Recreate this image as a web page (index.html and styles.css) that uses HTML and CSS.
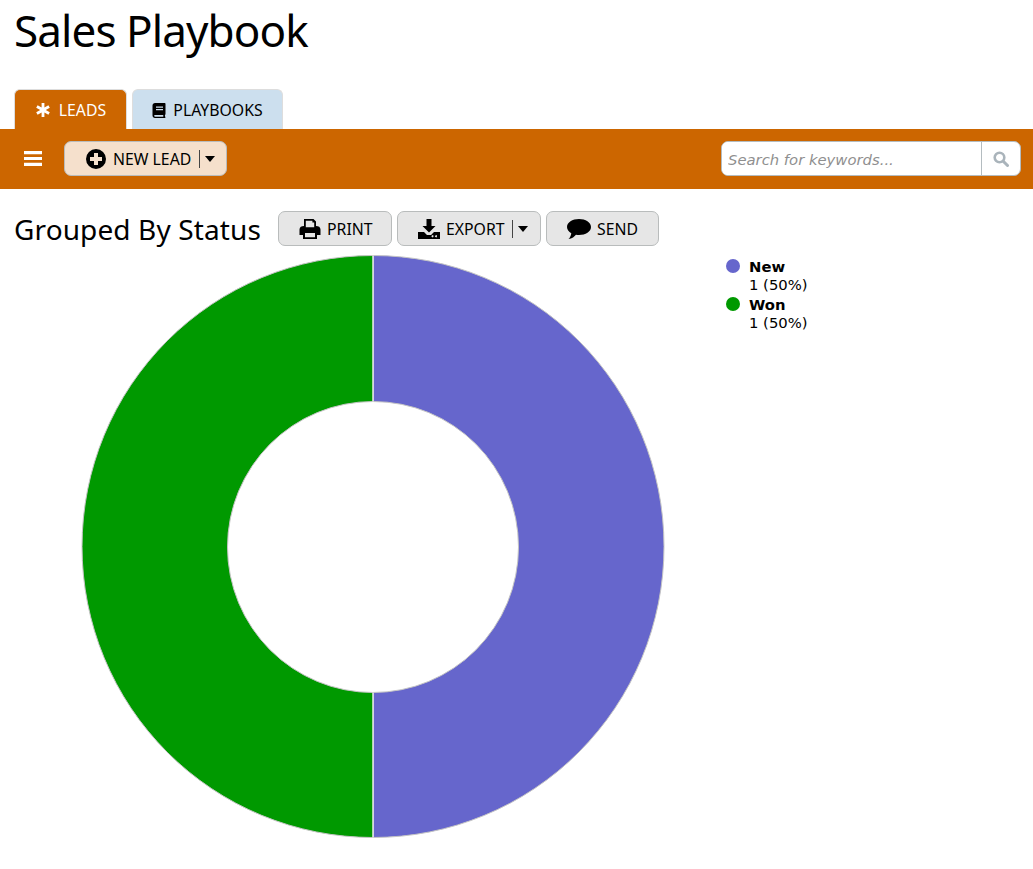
FILE: index.html
```html
<!DOCTYPE html>
<html lang="en">
<head>
    <meta charset="UTF-8">
    <title>Sales Playbook</title>
    <link rel="stylesheet" href="styles.css">
</head>
<body>
    <h1>Sales Playbook</h1>

    <div class="tabs">
        <a class="tab active">
            <svg class="tab-icon" viewBox="0 0 16 16"><path d="M6.6 1h2.8v4.6l4-2.3 1.4 2.4-4 2.3 4 2.3-1.4 2.4-4-2.3V15H6.6v-4.6l-4 2.3-1.4-2.4 4-2.3-4-2.3 1.4-2.4 4 2.3z"/></svg>
            LEADS
        </a>
        <a class="tab">
            <svg class="book-icon" viewBox="0 0 14 16"><path fill-rule="evenodd" d="M3 1h9.5c.6 0 1 .4 1 1v10c0 .4-.2.7-.5.9-.1.5-.1 1.200 0 1.700.3.200.5.400.5.700 0 .400-.3.700-.7.700H3c-1.400 0-2.500-1.100-2.500-2.500v-10C.5 2.100 1.600 1 3 1zm1 3.500v1.200h7V4.500zm0 2.500v1.200h7V7zM3 13c-.5 0-.9.400-.9.800s.4.900.9.900h8.300c-.1-.6-.1-1.200 0-1.700z"/></svg>
            PLAYBOOKS
        </a>
    </div>

    <div class="toolbar">
        <div class="toolbar-left">
            <svg class="menu-icon" viewBox="0 0 18 15"><path d="M0 0h18v3.200H0zM0 5.900h18v3.200H0zM0 11.800h18V15H0z"/></svg>
            <button class="btn btn-new">
                <svg class="btn-icon" viewBox="0 0 20 20"><path fill-rule="evenodd" d="M10 0a10 10 0 1 1 0 20 10 10 0 0 1 0-20zM8 4v4H4v4h4v4h4v-4h4V8h-4V4z"/></svg>
                NEW LEAD
                <span class="caret-wrap"><span class="caret"></span></span>
            </button>
        </div>
        <div class="search">
            <input type="text" placeholder="Search for keywords...">
            <span class="search-btn">
                <svg viewBox="0 0 16 16"><circle cx="6.500" cy="6.500" r="4.800" fill="none" stroke="#aab4bb" stroke-width="2.600"/><path d="M10 10l4.500 4.500" stroke="#aab4bb" stroke-width="3" stroke-linecap="round"/></svg>
            </span>
        </div>
    </div>

    <div class="heading-row">
        <h2>Grouped By Status</h2>
        <button class="btn btn-print">
            <svg class="btn-icon wide" viewBox="0 0 22 20"><path fill-rule="evenodd" d="M5 0h9.500L17 2.500V7c2.500 0 4.500 1 4.500 3.500V16H18v4H4v-4H.5v-5.500C.5 8 2.500 7 5 7zm1.800 1.800v6.400h8.400V3.600h-1.800V1.800zM6 14v4.200h10V14z"/></svg>
            PRINT
        </button>
        <button class="btn btn-export">
            <svg class="btn-icon wide" viewBox="0 0 22 20"><path fill-rule="evenodd" d="M8.500 0h5v7h4l-6.500 6.500L4.500 7h4zM0 13h6l3 3h4l3-3h6v7H0zm15.500 4.200a1 1 0 1 0 0 .1zm3.500 0a1 1 0 1 0 0 .1z"/></svg>
            EXPORT
            <span class="caret-wrap"><span class="caret"></span></span>
        </button>
        <button class="btn btn-send">
            <svg class="btn-icon wide send-icon" viewBox="0 0 24 20"><path d="M12 0c6.600 0 12 3.500 12 8s-5.400 8-12 8c-1 0-2-.1-3-.3C7.500 17.500 5 19.500 1.500 20c1.500-1.500 2.500-3.200 2.800-5.800C1.700 12.800 0 10.500 0 8c0-4.500 5.400-8 12-8z"/></svg>
            SEND
        </button>
    </div>

    <div class="chart-row">
        <svg class="donut" width="584" height="584" viewBox="0 0 584 584">
            <!-- right half = New, left half = Won -->
            <path d="M292 .5A291 291 0 0 1 292 582.500V437.500A145.500 145.500 0 0 0 292 146.500z" fill="#6666cc" stroke="#c4c4c4" stroke-width="1"/>
            <path d="M292 582.500A291 291 0 0 1 292 .5V146.500A145.500 145.500 0 0 0 292 437.500z" fill="#009900" stroke="#c4c4c4" stroke-width="1"/>
            <path d="M292 .5V146.500M292 437.500V582.500" stroke="#fff" stroke-width="1"/>
        </svg>
        <div class="legend">
            <div class="legend-item">
                <span class="dot dot-new"></span>
                <div><b>New</b><br>1 (50%)</div>
            </div>
            <div class="legend-item">
                <span class="dot dot-won"></span>
                <div><b>Won</b><br>1 (50%)</div>
            </div>
        </div>
    </div>
</body>
</html>
```

FILE: styles.css
```css
body {
    font-family: "Noto Sans", "DejaVu Sans", sans-serif;
    color: #000;
    background-color: #fff;
    margin: 0;
}

h1 {
    font-size: 44px;
    font-weight: normal;
    line-height: 60px;
    margin: 0;
    padding: 0 14px 1px;
    letter-spacing: -0.9px;
}

.tabs {
    display: flex;
    gap: 5px;
    padding: 28px 0 0 14px;
    height: 40px;
}

.tab {
    display: flex;
    align-items: center;
    justify-content: center;
    gap: 7px;
    height: 40px;
    box-sizing: border-box;
    font-size: 15.8px;
    background-color: #ccdfee;
    border: 1px solid #ddd;
    border-bottom: none;
    border-radius: 6px 6px 0 0;
    width: 151px;
}

.tab.active {
    background-color: #cc6600;
    color: #fff;
    width: 113px;
    gap: 8px;
}

.tab-icon {
    width: 16px;
    height: 16px;
    fill: #fff;
}

.book-icon {
    width: 14px;
    height: 16px;
}

.toolbar {
    display: flex;
    justify-content: space-between;
    align-items: center;
    height: 60px;
    background-color: #cc6600;
    padding: 0 12px 1px 24px;
    box-sizing: border-box;
}

.toolbar-left {
    display: flex;
    align-items: center;
    gap: 22px;
}

.menu-icon {
    width: 18px;
    height: 15px;
    fill: #fff;
}

.btn {
    display: flex;
    align-items: center;
    justify-content: flex-start;
    height: 35px;
    padding: 0;
    font-family: inherit;
    font-size: 15.8px;
    color: #000;
    background-color: #e6e6e6;
    border: 1px solid #b9bcbc;
    border-radius: 7px;
}

.btn-new {
    width: 163px;
    background-color: #f5e0cc;
    gap: 7px;
    padding-left: 21px;
}

.btn-icon {
    width: 20px;
    height: 20px;
}

.btn-icon.wide {
    width: 22px;
}

.send-icon {
    width: 24px !important;
}

.caret-wrap {
    display: flex;
    align-items: center;
    height: 18px;
    margin-left: 1px;
    padding-left: 5px;
    border-left: 1px solid #444;
}

.caret {
    border-left: 5.5px solid transparent;
    border-right: 5.500px solid transparent;
    border-top: 6px solid #000;
}

.search {
    display: flex;
    width: 300px;
    height: 35px;
    box-sizing: border-box;
    background-color: #fff;
    border: 1px solid #b4bcc0;
    border-radius: 7px;
    overflow: hidden;
}

.search input {
    flex: 1;
    min-width: 0;
    border: none;
    outline: none;
    padding: 1px 6px 0;
    font-family: "DejaVu Sans", sans-serif;
    font-size: 14.8px;
    font-style: italic;
}

.search input::placeholder {
    color: #8f8f8f;
}

.search-btn {
    display: flex;
    align-items: center;
    justify-content: center;
    width: 38px;
    border-left: 1px solid #b4bcc0;
}

.search-btn svg {
    width: 16px;
    height: 16px;
}

.heading-row {
    display: flex;
    align-items: center;
    height: 35px;
    margin-top: 22px;
    padding-left: 14px;
    gap: 5px;
}

h2 {
    font-size: 28px;
    font-weight: normal;
    line-height: 38px;
    width: 247px;
    margin: 0 12px 0 0;
    letter-spacing: 0.12px;
    white-space: nowrap;
}

.btn-print {
    width: 114px;
    gap: 6px;
    padding-left: 20px;
}

.btn-export {
    width: 144px;
    gap: 6px;
    padding-left: 20px;
}

.btn-send {
    width: 113px;
    gap: 6px;
    padding-left: 20px;
}

.chart-row {
    display: flex;
    align-items: flex-start;
    padding: 9px 0 0 81px;
}

.donut {
    display: block;
}

.legend {
    margin: 3px 0 0 61px;
    font-family: "DejaVu Sans", sans-serif;
    font-size: 14.8px;
    line-height: 18px;
}

.legend-item {
    display: flex;
    gap: 9px;
    margin-bottom: 2px;
}

.dot {
    width: 14px;
    height: 14px;
    border-radius: 50%;
    margin-top: 1px;
}

.dot-new {
    background-color: #6666cc;
}

.dot-won {
    background-color: #009900;
}
```
